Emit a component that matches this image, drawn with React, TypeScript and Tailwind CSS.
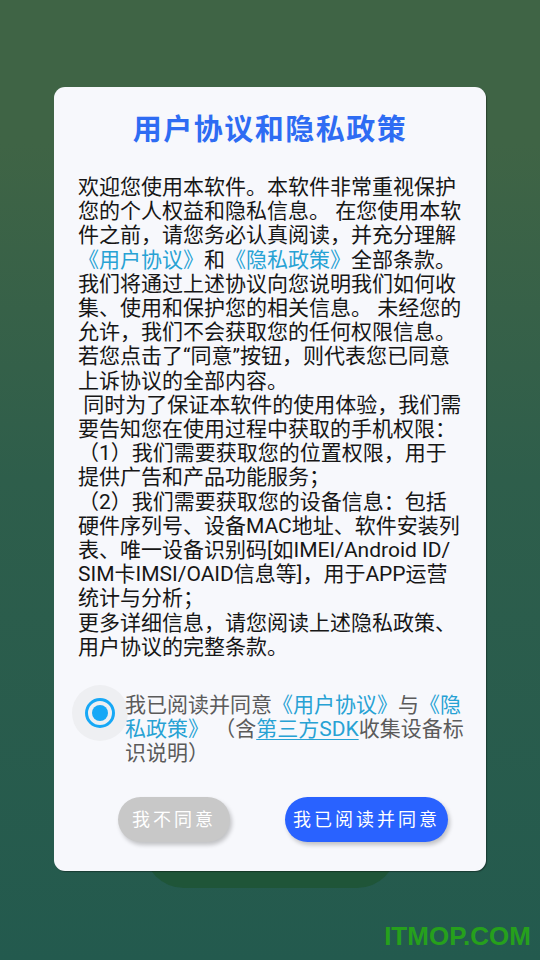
import React from "react";

const cjk = { fontFamily: 'Roboto, "Noto Sans CJK SC", "Noto Sans", sans-serif' };

function Link({ children, underline }: { children: React.ReactNode; underline?: boolean }) {
  return (
    <span className={underline ? "text-[#27a2d4] underline decoration-1 underline-offset-[3px]" : "text-[#27a2d4]"}>
      {children}
    </span>
  );
}

const bodyLines: React.ReactNode[] = [
  "欢迎您使用本软件。本软件非常重视保护",
  "您的个人权益和隐私信息。 在您使用本软",
  "件之前，请您务必认真阅读，并充分理解",
  <>
    <Link>《用户协议》</Link>和<Link>《隐私政策》</Link>全部条款。
  </>,
  "我们将通过上述协议向您说明我们如何收",
  "集、使用和保护您的相关信息。 未经您的",
  "允许，我们不会获取您的任何权限信息。",
  "若您点击了“同意”按钮，则代表您已同意",
  "上诉协议的全部内容。",
  "\u00a0同时为了保证本软件的使用体验，我们需",
  "要告知您在使用过程中获取的手机权限：",
  "（1）我们需要获取您的位置权限，用于",
  "提供广告和产品功能服务；",
  "（2）我们需要获取您的设备信息：包括",
  "硬件序列号、设备MAC地址、软件安装列",
  "表、唯一设备识别码[如IMEI/Android ID/",
  "SIM卡IMSI/OAID信息等]，用于APP运营",
  "统计与分析；",
  "更多详细信息，请您阅读上述隐私政策、",
  "用户协议的完整条款。",
];

export default function App() {
  return (
    <div
      className="relative h-[960px] w-[540px] overflow-hidden bg-gradient-to-b from-[#3f6445] from-15% via-[#2e5e4b] to-[#235a4e]"
      style={cjk}
    >
      {/* page behind the dialog */}
      <div className="flex h-full flex-col items-center pt-[800px]">
        <div className="h-[88px] w-[253px] rounded-b-[40px] bg-[#1f5538]" />
      </div>

      {/* dialog */}
      <div className="absolute left-[54px] top-[87px] w-[432px] rounded-[11px] bg-[#f7f8fc] pb-[29px] pt-[20px] shadow-[1px_1px_1px_rgba(0,0,0,0.35)]">
        <h1 className="text-center text-[29px] font-bold leading-[46px] tracking-[1.5px] text-[#2e6cf3]">
          用户协议和隐私政策
        </h1>

        <div className="mt-[22px] pl-[24px] text-[21px] leading-[24.2px] text-[#161616]">
          {bodyLines.map((l, i) => (
            <div key={i} className="whitespace-pre">
              {l}
            </div>
          ))}
        </div>

        <div className="mt-[26px] flex items-start pl-[18px]">
          <div className="flex h-[56px] w-[56px] shrink-0 items-center justify-center rounded-full bg-[#eeeff2]">
            <div className="flex h-[30px] w-[30px] items-center justify-center rounded-full border-[3px] border-[#17a8f6]">
              <div className="h-[16px] w-[16px] rounded-full bg-[#17a8f6]" />
            </div>
          </div>
          <div className="-ml-[3px] mt-[8px] text-[21px] leading-[24px] text-[#5b5b5b]">
            <div className="whitespace-pre">
              我已阅读并同意<Link>《用户协议》</Link>与<Link>《隐</Link>
            </div>
            <div className="whitespace-pre">
              <Link>私政策》</Link> （含<Link underline>第三方SDK</Link>收集设备标
            </div>
            <div className="whitespace-pre">识说明）</div>
          </div>
        </div>

        <div className="mt-[32px] flex pl-[64px]">
          <button className="flex h-[45px] w-[112px] items-center justify-center rounded-full bg-[#c8c8c8] text-[18px] tracking-[3px] text-white shadow-[2px_3px_4px_rgba(0,0,0,0.22)]">
            我不同意
          </button>
          <button className="ml-[55px] flex h-[45px] w-[163px] items-center justify-center rounded-full bg-[#2962ff] text-[18px] tracking-[3px] text-white shadow-[2px_3px_4px_rgba(0,0,0,0.22)]">
            我已阅读并同意
          </button>
        </div>
      </div>

      {/* watermark */}
      <div
        className="absolute bottom-[11px] right-[9px] text-[26px] font-bold leading-none text-[#26a01c]"
        style={{ fontFamily: '"Liberation Sans", Arial, sans-serif' }}
      >
        ITMOP.COM
      </div>
    </div>
  );
}
